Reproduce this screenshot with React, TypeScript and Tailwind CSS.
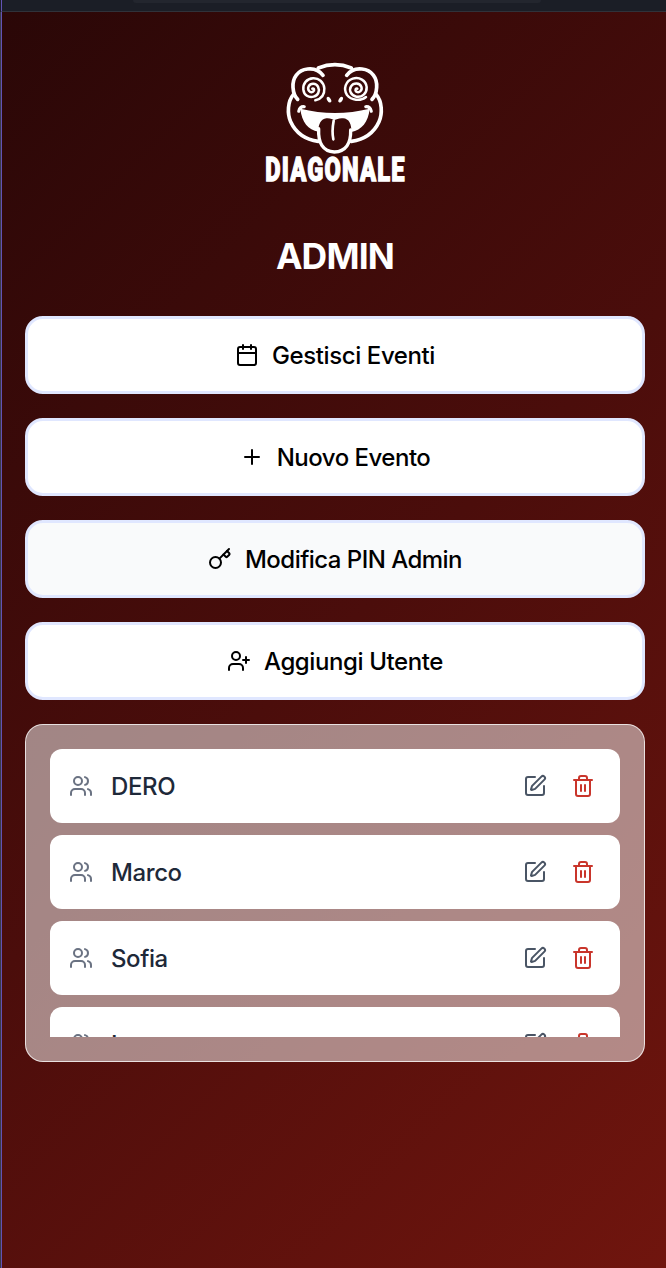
import React from "react";
import { Calendar, Key, Plus, SquarePen, Trash2, UserPlus, Users, type LucideIcon } from "lucide-react";

type Action = { label: string; icon: LucideIcon; active?: boolean; spacing: string };

const actions: Action[] = [
  { label: "Gestisci Eventi", icon: Calendar, spacing: "tracking-[-0.4px]" },
  { label: "Nuovo Evento", icon: Plus, spacing: "tracking-[-0.5px]" },
  { label: "Modifica PIN Admin", icon: Key, active: true, spacing: "tracking-[-0.53px]" },
  { label: "Aggiungi Utente", icon: UserPlus, spacing: "tracking-[-0.4px]" },
];

const users = ["DERO", "Marco", "Sofia", "Luca"];

function Logo() {
  return (
    <svg viewBox="0 0 480 420" className="h-[140px] w-[160px]" fill="none" stroke="#fff" strokeWidth={11} strokeLinecap="round" strokeLinejoin="round">
      <path d="M190 54Q240 34 289 54" />
      <path d="M204 76C192 60 175 55 158 57C128 60 112 84 114 112C115 128 120 140 128 148" />
      <path d="M275 76C287 60 304 55 321 57C351 60 367 84 365 112C364 128 359 140 351 148" />
      <path d="M115 134C98 154 96 190 107 215C123 250 155 269 190 274" />
      <path d="M364 134C381 154 383 190 372 215C356 250 324 269 289 274" />
      <path strokeWidth={7.5} d="M181 151C201 146 209 133 208 115C206 95 191 84 174 85C155 86 143 101 145 119C147 136 161 144 176 140C190 136 195 122 189 110C183 99 167 98 161 109C156 120 165 130 174 125C180 121 177 114 172 116" />
      <path strokeWidth={7.5} d="M333 141C316 155 289 151 276 135C264 117 272 93 293 86C313 80 333 91 335 111C336 130 321 143 304 140C288 137 281 121 288 109C296 97 314 98 319 110C323 121 313 130 304 125C299 121 302 114 307 116" />
      <ellipse cx="222" cy="149" rx="5.5" ry="9.5" transform="rotate(-32 222 149)" fill="#fff" stroke="none" />
      <ellipse cx="257" cy="149" rx="5.5" ry="9.5" transform="rotate(32 257 149)" fill="#fff" stroke="none" />
      <path d="M136 176C205 193 275 193 344 176C340 216 320 240 289 246C290 222 282 206 264 205C251 204 245 208 239 210C233 208 226 204 214 205C198 207 190 222 190 245C160 240 140 216 136 176Z" fill="#fff" stroke="none" />
      <path strokeWidth={9} d="M131 184C133 175 139 169 148 170M349 184C347 175 341 169 332 170" />
      <path strokeWidth={10} d="M191 236C189 278 203 305 238 306C273 305 288 279 287 240" />
      <path strokeWidth={8} d="M236 212Q230 244 235 268" />
      <text x="31" y="394" textLength="421" lengthAdjust="spacingAndGlyphs" className="font-[Roboto,sans-serif] text-[101px] font-black tracking-[5px]" fill="#fff" stroke="#fff" strokeWidth="4" strokeLinejoin="miter">
        DIAGONALE
      </text>
    </svg>
  );
}

function ActionButton({ label, icon: Icon, active, spacing }: Action) {
  return (
    <button className={`flex h-[78px] w-full items-center justify-center gap-[13px] rounded-[18px] border-3 border-[#e0e7ff] text-2xl font-medium text-black ${spacing} ${active ? "bg-[#f9fafb]" : "bg-white"}`}>
      <Icon size={24} strokeWidth={2} />
      <span className="pt-0.5">{label}</span>
    </button>
  );
}

function UserRow({ name }: { name: string }) {
  return (
    <div className="flex h-[74px] shrink-0 items-center rounded-xl bg-white pr-[25px] pl-[19px]">
      <Users size={24} className="text-gray-500" />
      <span className="ml-[18px] flex-1 pt-0.5 text-2xl font-medium tracking-[-0.4px] text-gray-800">{name}</span>
      <div className="flex gap-6">
        <SquarePen size={24} className="text-gray-600" />
        <Trash2 size={24} className="text-[#c9352b]" />
      </div>
    </div>
  );
}

export default function App() {
  return (
    <div className="flex h-[1268px] w-full flex-col overflow-hidden bg-[#1b1e26] font-[Inter,sans-serif]">
      <header className="ml-px flex h-3 shrink-0 justify-center border-b border-l border-b-[#30323a] border-l-[#6353b4] pl-1.5">
        <div className="h-[3px] w-[408px] rounded-b-md bg-[#23262e]" />
      </header>
      <div className="flex min-h-0 flex-1 border-l border-[#3a3b48]">
        <main className="flex flex-1 flex-col items-center border-l border-[#6353b4] bg-[linear-gradient(135deg,#2a0707_0%,#4b0d0b_50%,#70150e_100%)] pr-[21px] pl-[23px]">
          <div className="mt-[38px]">
            <Logo />
          </div>
          <h1 className="mt-[44px] text-[35.5px] leading-[46px] font-bold tracking-[-0.8px] text-white">ADMIN</h1>
          <div className="mt-[36px] flex w-full flex-col gap-6">
            {actions.map((a) => (
              <ActionButton key={a.label} {...a} />
            ))}
            <section className="h-[338px] w-full rounded-[18px] border border-white/75 bg-white/50 p-6">
              <div className="flex h-[288px] flex-col gap-3 overflow-hidden">
                {users.map((name) => (
                  <UserRow key={name} name={name} />
                ))}
              </div>
            </section>
          </div>
        </main>
      </div>
    </div>
  );
}
